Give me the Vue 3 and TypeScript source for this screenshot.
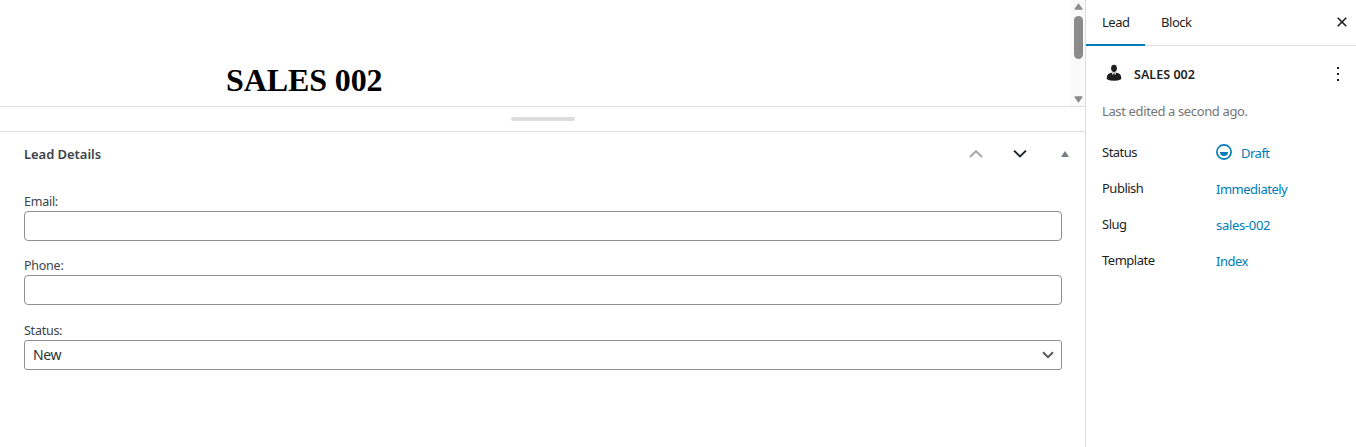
<script setup lang="ts">
import { ref } from 'vue'

interface SummaryRow {
  label: string
  value: string
  kind: string
}

const title = 'SALES 002'
const activeTab = ref('Lead')
const tabs: string[] = ['Lead', 'Block']
const status = ref('New')
const email = ref('')
const phone = ref('')
const rows: SummaryRow[] = [
  { label: 'Status', value: 'Draft', kind: 'draft' },
  { label: 'Publish', value: 'Immediately', kind: 'publish' },
  { label: 'Slug', value: 'sales-002', kind: 'slug' },
  { label: 'Template', value: 'Index', kind: 'template' },
]
</script>

<template>
  <div class="editor">
    <main class="content">
      <section class="canvas">
        <h1>{{ title }}</h1>
        <div class="scrollbar">
          <svg width="15" height="106" viewBox="0 0 15 106">
            <path d="M8.5 3.8 L12.2 9.2 H4.8 Z" fill="#8b8b8b" stroke="#8b8b8b" stroke-linejoin="round" />
            <rect x="4" y="16" width="9" height="43" rx="4.5" fill="#8b8b8b" />
            <path d="M4.8 96.8 H12.2 L8.5 102.2 Z" fill="#8b8b8b" stroke="#8b8b8b" stroke-linejoin="round" />
          </svg>
        </div>
      </section>
      <div class="resizer"><span></span></div>
      <section class="metabox">
        <header>
          <h2>Lead Details</h2>
          <div class="actions">
            <svg width="14" height="10" viewBox="0 0 14 10"><path d="M1 8 L7 2.2 L13 8" fill="none" stroke="#a7aaad" stroke-width="2" /></svg>
            <svg width="14" height="10" viewBox="0 0 14 10"><path d="M1 1.6 L7 7.4 L13 1.6" fill="none" stroke="#1d2327" stroke-width="2" /></svg>
            <svg width="8" height="6" viewBox="0 0 8 6"><path d="M4 0 L8 6 H0 Z" fill="#787c82" /></svg>
          </div>
        </header>
        <div class="field">
          <label for="email">Email:</label>
          <input id="email" v-model="email" type="text" />
        </div>
        <div class="field phone">
          <label for="phone">Phone:</label>
          <input id="phone" v-model="phone" type="text" />
        </div>
        <div class="field">
          <label>Status:</label>
          <button class="select" type="button">
            <span>{{ status }}</span>
            <svg width="12" height="8" viewBox="0 0 12 8"><path d="M1 1.3 L6 6.2 L11 1.3" fill="none" stroke="#50575e" stroke-width="2" /></svg>
          </button>
        </div>
      </section>
    </main>
    <aside>
      <nav>
        <button v-for="tab in tabs" :key="tab" :class="['tab', tab.toLowerCase(), { active: tab === activeTab }]" @click="activeTab = tab"><span>{{ tab }}</span></button>
        <svg class="close" width="10" height="10" viewBox="0 0 10 10"><path d="M.7 .7 L9.3 9.3 M9.3 .7 L.7 9.3" stroke="#1e1e1e" stroke-width="1.6" /></svg>
      </nav>
      <div class="summary">
        <div class="post">
          <svg width="16" height="18" viewBox="0 0 16 18">
            <ellipse cx="8" cy="4.3" rx="2.9" ry="3.6" fill="#1e1e1e" />
            <path d="M5.4 8.8 H10.6 C13.2 9.1 15.2 10.8 15.2 13.5 V15.2 Q12 16.7 8 16.7 T.8 15.2 V13.5 C.8 10.8 2.8 9.1 5.4 8.8 Z" fill="#1e1e1e" />
            <path d="M5.7 8.3 L8 9.5 L10.3 8.3 L9.6 11 L8 10.1 L6.4 11 Z" fill="#c8c8c8" />
          </svg>
          <strong>{{ title }}</strong>
          <svg class="more" width="4" height="16" viewBox="0 0 4 16"><path d="M1 1h2v2H1z M1 7h2v2H1z M1 13h2v2H1z" fill="#1e1e1e" /></svg>
        </div>
        <p>Last edited a second ago.</p>
        <div v-for="row in rows" :key="row.label" class="row">
          <span class="key">{{ row.label }}</span>
          <a :class="row.kind">
            <svg v-if="row.kind === 'draft'" width="16" height="16" viewBox="0 0 16 16"><circle cx="8" cy="8" r="7.1" fill="none" stroke="#007cba" stroke-width="1.7" /><path d="M4 8h8a4 4 0 0 1-8 0Z" fill="#007cba" /></svg>
            <span>{{ row.value }}</span>
          </a>
        </div>
      </div>
    </aside>
  </div>
</template>

<style>
body { margin: 0; overflow: hidden; background: #fff; }
</style>

<style scoped>
* { box-sizing: border-box; }
.editor { display: flex; width: 1356px; height: 447px; background: #fff; font: 13px/20px "Segoe UI", "Noto Sans", sans-serif; color: #1e1e1e; }
svg { display: block; flex: none; }
button { font: inherit; color: inherit; background: none; border: 0; padding: 0; }
.content { width: 1085px; display: flex; flex-direction: column; }
.canvas { height: 106px; display: flex; justify-content: space-between; }
h1 { margin: 62px 0 0 226px; font: bold 32px/37px "Times New Roman", "Liberation Serif", serif; letter-spacing: -.1px; color: #000; white-space: nowrap; }
.scrollbar { width: 15px; background: #fafafa; }
.resizer { height: 26px; border-top: 1px solid #ddd; border-bottom: 1px solid #ddd; display: flex; justify-content: center; padding-top: 10px; }
.resizer span { width: 64px; height: 4px; border-radius: 2px; background: #ddd; }
.metabox { padding: 0 23px 0 24px; color: #3c434a; }
header { height: 59px; display: flex; justify-content: space-between; align-items: flex-start; }
h2 { margin: 12px 0 0; font-size: 13px; line-height: 20px; font-weight: 600; letter-spacing: -.05px; color: #3c434a; }
.actions { height: 44px; margin-right: -7px; display: flex; align-items: center; }
.actions svg:nth-child(2) { margin-left: 30px; }
.actions svg:nth-child(3) { margin-left: 33.5px; margin-right: .5px; margin-top: -1px; }
.field { height: 64px; display: flex; flex-direction: column; }
.field.phone { height: 65px; }
label { height: 20px; line-height: 22px; font-size: 12.5px; align-self: flex-start; letter-spacing: -.25px; }
input, .select { width: 1038px; height: 30px; border: 1px solid #8c8f94; border-radius: 4px; background: #fff; }
input { outline: 0; padding: 0 8px; }
.select { border-radius: 3px; display: flex; align-items: center; justify-content: space-between; padding: 0 7px 0 8px; font-size: 14px; letter-spacing: -.4px; color: #2c3338; }
aside { width: 271px; border-left: 1px solid #ddd; }
nav { height: 46px; border-bottom: 1px solid #ddd; display: flex; align-items: center; }
.tab { height: 46px; padding: 0 16px; border-bottom: 2px solid transparent; letter-spacing: -.45px; text-align: left; }
.tab.lead { width: 59px; }
.tab.active { border-color: #007cba; }
.close { margin-left: auto; margin-right: 9px; margin-top: -1px; }
.summary { padding: 0 16px; }
.post { height: 56px; display: flex; align-items: center; padding-left: 4px; }
.post > svg:first-child { margin-top: -3px; }
.post strong { margin-left: 12px; margin-top: 2px; font-size: 12.5px; font-weight: 600; letter-spacing: .03px; }
.more { margin-left: auto; }
p { margin: -1px 0 16px; height: 20px; color: #757575; letter-spacing: -.37px; white-space: nowrap; }
.row { height: 36px; display: flex; align-items: flex-start; }
.key { width: 114px; height: 32px; line-height: 31px; letter-spacing: -.5px; }
.row a { height: 32px; line-height: 33px; display: flex; align-items: center; color: #007cba; letter-spacing: -.5px; }
.row a.slug { letter-spacing: -.3px; }
.row a svg { margin-right: 9px; margin-top: -2px; }
</style>
